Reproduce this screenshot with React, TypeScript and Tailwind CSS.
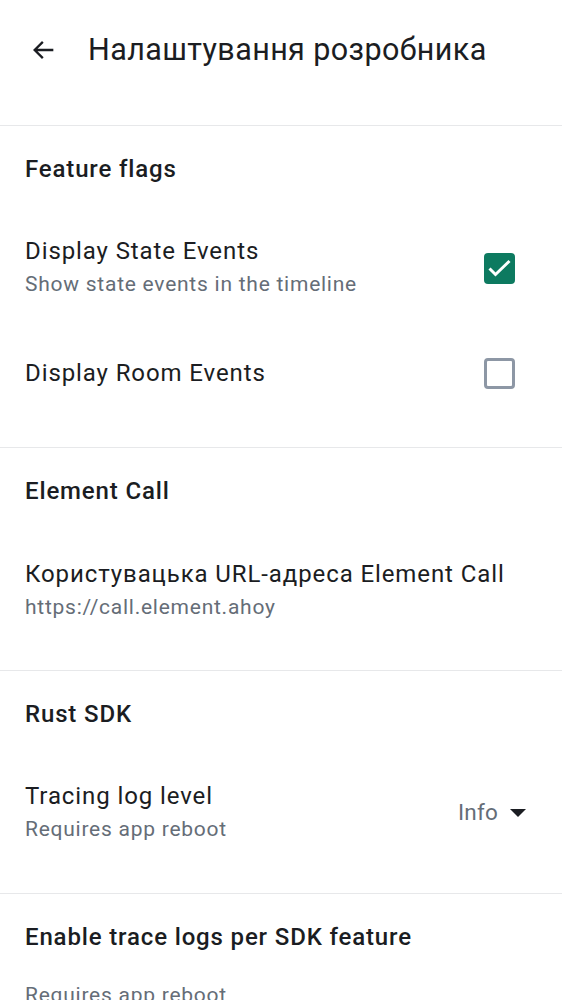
import React from "react";

function Divider() {
  return <div className="h-px w-full bg-[#e7e8ea]" />;
}

function Heading({ children }: { children: React.ReactNode }) {
  return (
    <div className="h-[84px] flex items-center pt-px px-[25px] text-[24px] tracking-[0.85px] font-medium text-[#1b1d22]">
      {children}
    </div>
  );
}

function Checkbox({ checked }: { checked: boolean }) {
  if (checked) {
    return (
      <div className="w-[31px] h-[31px] rounded-[4px] bg-[#0d7a60]">
        <svg width="31" height="31" viewBox="0 0 31 31" fill="none">
          <path d="M5.5 15.5l6 6L25.5 8" stroke="white" strokeWidth="3" />
        </svg>
      </div>
    );
  }
  return <div className="w-[31px] h-[31px] rounded-[4px] border-[3px] border-[#8d97a5]" />;
}

function Item({
  title,
  subtitle,
  height,
  right,
}: {
  title: string;
  subtitle?: string;
  height: string;
  right?: React.ReactNode;
}) {
  return (
    <div className={`${height} flex items-center justify-between pl-[25px] pr-[47px]`}>
      <div className="flex flex-col">
        <span className="text-[24px] leading-[32px] tracking-[0.9px] text-[#1b1d22]">{title}</span>
        {subtitle && (
          <span className="text-[21px] leading-[34px] tracking-[0.75px] text-[#656d77]">{subtitle}</span>
        )}
      </div>
      {right}
    </div>
  );
}

export default function App() {
  return (
    <div className="w-[562px] h-[1000px] overflow-hidden bg-white" style={{ fontFamily: "Roboto, 'Noto Sans', sans-serif" }}>
      <div className="h-[100px] flex items-center pl-[30px]">
        <svg width="28" height="28" viewBox="0 0 24 24" fill="none">
          <path d="M20 12H4.5M11 5l-7 7 7 7" stroke="#1b1d22" strokeWidth="2" />
        </svg>
        <span className="ml-[30px] text-[30.5px] tracking-[0.4px] text-[#1b1d22]">Налаштування розробника</span>
      </div>
      <div className="h-[25px]" />
      <Divider />
      <Heading>Feature flags</Heading>
      <Item
        title="Display State Events"
        subtitle="Show state events in the timeline"
        height="h-[116px]"
        right={<Checkbox checked />}
      />
      <Item title="Display Room Events" height="h-[94px]" right={<Checkbox checked={false} />} />
      <div className="h-[27px]" />
      <Divider />
      <Heading>Element Call</Heading>
      <Item title="Користувацька URL-адреса Element Call" subtitle="https://call.element.ahoy" height="h-[118px]" />
      <div className="h-[20px]" />
      <Divider />
      <Heading>Rust SDK</Heading>
      <div className="h-[116px] flex items-center justify-between pl-[25px] pr-[36px]">
        <div className="flex flex-col">
          <span className="text-[24px] leading-[32px] tracking-[0.9px] text-[#1b1d22]">Tracing log level</span>
          <span className="text-[21px] leading-[34px] tracking-[0.75px] text-[#656d77]">Requires app reboot</span>
        </div>
        <div className="flex items-center gap-[12px]">
          <span className="text-[22.5px] tracking-[0.2px] text-[#656d77]">Info</span>
          <svg width="16" height="8" viewBox="0 0 16 8">
            <path d="M0 0h16L8 8z" fill="#1b1d22" />
          </svg>
        </div>
      </div>
      <div className="h-[22px]" />
      <Divider />
      <Heading>Enable trace logs per SDK feature</Heading>
      <div className="px-[25px] text-[21px] leading-[34px] tracking-[0.75px] text-[#656d77]">Requires app reboot</div>
    </div>
  );
}
